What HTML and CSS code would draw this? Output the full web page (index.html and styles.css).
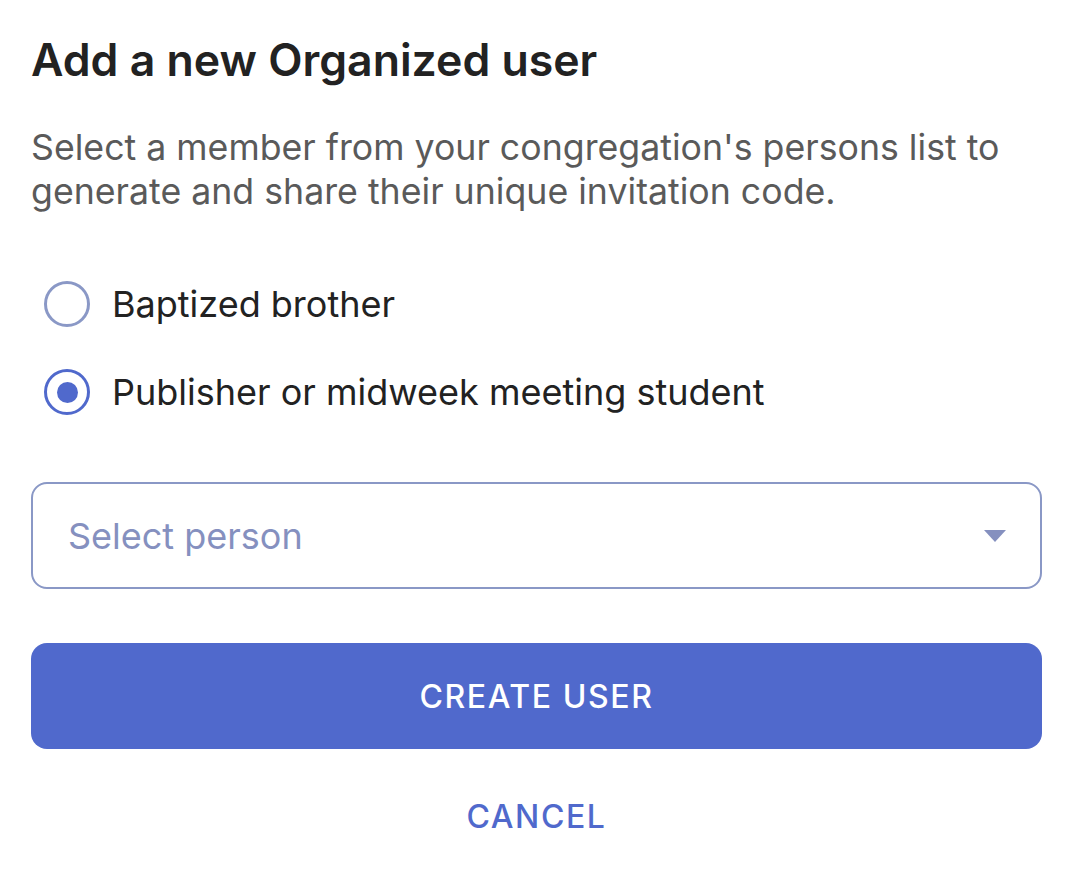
FILE: index.html
```html
<!DOCTYPE html>
<html>
<head>
<meta charset="utf-8">
<link rel="stylesheet" href="styles.css">
</head>
<body>
<div class="dialog">
  <h1 class="title">Add a new Organized user</h1>
  <p class="desc">Select a member from your congregation's persons list to generate and share their unique invitation code.</p>
  <div class="radios">
    <label class="radio-row">
      <span class="radio"></span>
      <span class="radio-label">Baptized brother</span>
    </label>
    <label class="radio-row">
      <span class="radio checked"><span class="dot"></span></span>
      <span class="radio-label">Publisher or midweek meeting student</span>
    </label>
  </div>
  <div class="select">
    <span class="placeholder">Select person</span>
    <svg class="caret" width="22" height="12" viewBox="0 0 22 12"><path d="M0 0 L22 0 L11 12 Z" fill="#8590bf"/></svg>
  </div>
  <button class="primary">CREATE USER</button>
  <button class="text-btn">CANCEL</button>
</div>
</body>
</html>
```
FILE: styles.css
```css
* { box-sizing: border-box; }
html, body { margin: 0; padding: 0; background: #fff; }
body { font-family: Inter, "Noto Sans", sans-serif; }
.dialog {
  padding: 33px 36px 0 31px;
  display: flex;
  flex-direction: column;
}
.title {
  margin: 0;
  font-size: 44.6px;
  font-weight: 600;
  color: #222222;
  line-height: 54px;
}
.desc {
  margin: 38px 0 0;
  font-size: 35.7px;
  line-height: 44px;
  color: #5a5a5a;
  font-weight: 400;
}
.radios {
  margin-top: 68px;
  display: flex;
  flex-direction: column;
  gap: 42px;
}
.radio-row {
  display: flex;
  align-items: center;
  gap: 22px;
  height: 46px;
  padding-left: 13px;
}
.radio {
  width: 46px;
  height: 46px;
  border-radius: 50%;
  border: 3px solid #8a98c6;
  display: flex;
  align-items: center;
  justify-content: center;
  flex: none;
}
.radio.checked { border-color: #5069cc; }
.dot {
  width: 21px;
  height: 21px;
  border-radius: 50%;
  background: #5069cc;
}
.radio-label {
  font-size: 36px;
  line-height: 46px;
  color: #222222;
}
.select {
  margin-top: 67px;
  height: 107px;
  border: 2px solid #8a98c6;
  border-radius: 16px;
  display: flex;
  align-items: center;
  justify-content: space-between;
  padding: 0 34px 0 35px;
}
.placeholder {
  font-size: 36px;
  color: #8590bf;
}
.primary {
  margin-top: 54px;
  height: 106px;
  border: none;
  border-radius: 16px;
  background: #5069cc;
  color: #fff;
  font-family: inherit;
  font-size: 32px;
  font-weight: 500;
  letter-spacing: 1.6px;
}
.text-btn {
  margin-top: 48px;
  align-self: center;
  border: none;
  background: none;
  color: #5069cc;
  font-family: inherit;
  font-size: 32px;
  font-weight: 500;
  letter-spacing: 1.6px;
  padding: 0;
}
```
